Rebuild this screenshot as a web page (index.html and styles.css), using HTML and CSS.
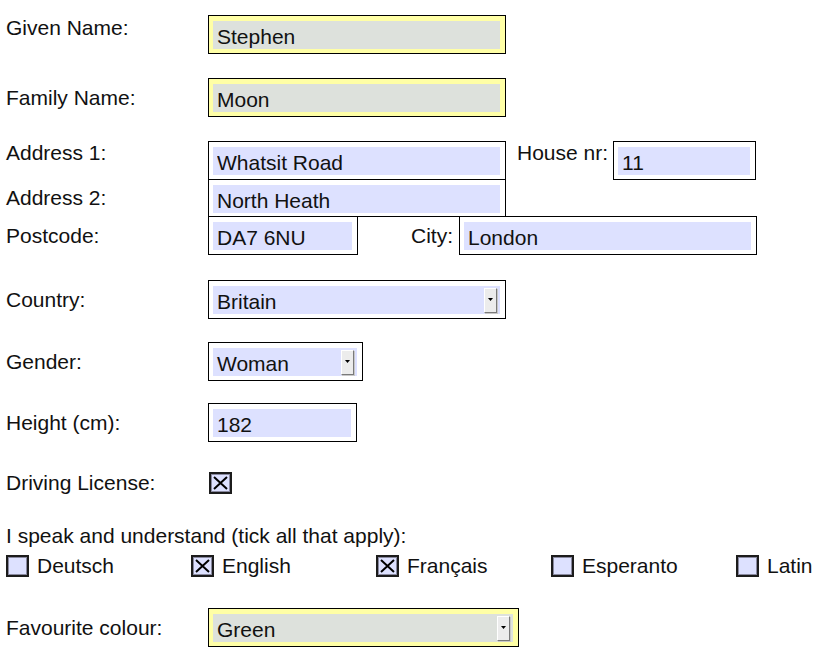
FILE: index.html
```html
<!DOCTYPE html>
<html lang="en">
<head>
<meta charset="utf-8">
<title>Personal details</title>
<link rel="stylesheet" href="styles.css">
</head>
<body>
<form class="form">
  <div class="row row-given">
    <label class="label label-top label-given">Given Name:</label>
    <div class="field field-req w-long"><input class="input input-req" value="Stephen"></div>
  </div>

  <div class="row row-family">
    <label class="label">Family Name:</label>
    <div class="field field-req w-long"><input class="input input-req" value="Moon"></div>
  </div>

  <div class="address">
    <div class="row">
      <label class="label label-top">Address 1:</label>
      <div class="field w-long"><input class="input" value="Whatsit Road"></div>
      <label class="inline-label label-top house-label">House nr:</label>
      <div class="field w-house"><input class="input" value="11"></div>
    </div>
    <div class="row row-joined">
      <label class="label">Address 2:</label>
      <div class="field field-mid w-long"><input class="input" value="North Heath"></div>
    </div>
    <div class="row row-joined">
      <label class="label">Postcode:</label>
      <div class="field w-post"><input class="input" value="DA7 6NU"></div>
      <label class="inline-label city-label">City:</label>
      <div class="field w-long"><input class="input" value="London"></div>
    </div>
  </div>

  <div class="row row-country">
    <label class="label">Country:</label>
    <div class="field w-long">
      <div class="select">
        <span class="select-value">Britain</span>
        <span class="select-btn"><svg class="arrow" width="5" height="3" viewBox="0 0 5 3"><polygon points="0,0 5,0 2.5,3" fill="#000"/></svg></span>
      </div>
    </div>
  </div>

  <div class="row row-gender">
    <label class="label">Gender:</label>
    <div class="field w-gender">
      <div class="select">
        <span class="select-value">Woman</span>
        <span class="select-btn"><svg class="arrow" width="5" height="3" viewBox="0 0 5 3"><polygon points="0,0 5,0 2.5,3" fill="#000"/></svg></span>
      </div>
    </div>
  </div>

  <div class="row row-height">
    <label class="label">Height (cm):</label>
    <div class="field w-height"><input class="input" value="182"></div>
  </div>

  <div class="row row-driving">
    <label class="label">Driving License:</label>
    <span class="check check-driving"><svg width="19" height="18" viewBox="0 0 19 18"><path d="M3 3 L16 15 M16 3 L3 15" stroke="#000" stroke-width="2" fill="none"/></svg></span>
  </div>

  <div class="speak">I speak and understand (tick all that apply):</div>
  <div class="langs">
    <div class="lang"><span class="check"></span><span>Deutsch</span></div>
    <div class="lang"><span class="check"><svg width="19" height="18" viewBox="0 0 19 18"><path d="M3 3 L16 15 M16 3 L3 15" stroke="#000" stroke-width="2" fill="none"/></svg></span><span>English</span></div>
    <div class="lang"><span class="check"><svg width="19" height="18" viewBox="0 0 19 18"><path d="M3 3 L16 15 M16 3 L3 15" stroke="#000" stroke-width="2" fill="none"/></svg></span><span>Français</span></div>
    <div class="lang"><span class="check"></span><span>Esperanto</span></div>
    <div class="lang"><span class="check"></span><span>Latin</span></div>
  </div>

  <div class="row row-colour">
    <label class="label">Favourite colour:</label>
    <div class="field field-req w-colour">
      <div class="select select-req">
        <span class="select-value">Green</span>
        <span class="select-btn"><svg class="arrow" width="5" height="3" viewBox="0 0 5 3"><polygon points="0,0 5,0 2.5,3" fill="#000"/></svg></span>
      </div>
    </div>
  </div>
</form>
</body>
</html>
```

FILE: styles.css
```css
html, body {
  margin: 0;
  padding: 0;
  background: #ffffff;
}

body {
  font-family: "Liberation Sans", Arial, sans-serif;
  font-size: 21px;
  color: #111111;
}

.form {
  display: flex;
  flex-direction: column;
  padding: 15px 0 0 6px;
}

.row {
  display: flex;
  align-items: center;
}

.label {
  flex: none;
  width: 202px;
  line-height: 24px;
}

.label-top {
  align-self: flex-start;
}

.label-given {
  padding-top: 1px;
}

.inline-label {
  flex: none;
  line-height: 24px;
}

.house-label {
  margin-left: 11px;
  margin-right: 5px;
}

.city-label {
  box-sizing: border-box;
  width: 101px;
  padding-right: 6px;
  text-align: right;
}

.field {
  box-sizing: border-box;
  flex: none;
  display: flex;
  height: 39px;
  border: 1px solid #000000;
  padding: 5px 5px 4px 4px;
  background: #ffffff;
}

.field-mid {
  height: 38px;
  padding-bottom: 3px;
}

.field-req {
  background: #ffffa6;
}

.w-long { width: 298px; }
.w-house { width: 143px; }
.w-post { width: 150px; }
.w-gender { width: 155px; }
.w-height { width: 149px; }
.w-colour { width: 311px; }

.input {
  box-sizing: border-box;
  width: 100%;
  height: 28px;
  margin: 0;
  border: 0;
  padding: 4px 4px 0 4px;
  font: inherit;
  line-height: 24px;
  color: #111111;
  background: #dde1ff;
  outline: none;
}

.input-req {
  background: #dde1dc;
}

.row-family { margin-top: 24px; }

.address {
  display: flex;
  flex-direction: column;
  margin-top: 24px;
}

.row-joined {
  margin-top: -1px;
}

.row-country { margin-top: 25px; }
.row-gender { margin-top: 23px; }
.row-height { margin-top: 22px; }
.row-driving { margin-top: 29px; }

.select {
  box-sizing: border-box;
  flex: 1;
  display: flex;
  align-items: center;
  height: 28px;
  background: #dde1ff;
}

.select-req {
  background: #dde1dc;
}

.select-value {
  flex: 1;
  padding: 4px 4px 0 4px;
  line-height: 24px;
}

.select-btn {
  box-sizing: border-box;
  flex: none;
  display: flex;
  align-items: center;
  justify-content: center;
  width: 13px;
  height: 25px;
  margin-right: 3px;
  background: #ececec;
  border-top: 1px solid #ffffff;
  border-left: 1px solid #ffffff;
  border-right: 1px solid #7a7a7a;
  border-bottom: 1px solid #7a7a7a;
  box-shadow: 1px 1px 0 #c8c8c8;
}

.arrow {
  display: block;
  margin-top: -2px;
}

.check {
  box-sizing: border-box;
  flex: none;
  display: inline-flex;
  width: 23px;
  height: 22px;
  border: 2px solid #1c1c1c;
  box-shadow: inset 0 0 0 1px #8a8aa0;
  background: #dde1ff;
}

.check svg {
  display: block;
}

.check-driving {
  margin-left: 1px;
}

.speak {
  margin-top: 29px;
  line-height: 24px;
}

.langs {
  display: grid;
  grid-template-columns: 185px 185px 175px 185px auto;
  margin-top: 6px;
}

.lang {
  display: flex;
  align-items: center;
  gap: 8px;
  line-height: 24px;
}

.row-colour { margin-top: 30px; }
```
